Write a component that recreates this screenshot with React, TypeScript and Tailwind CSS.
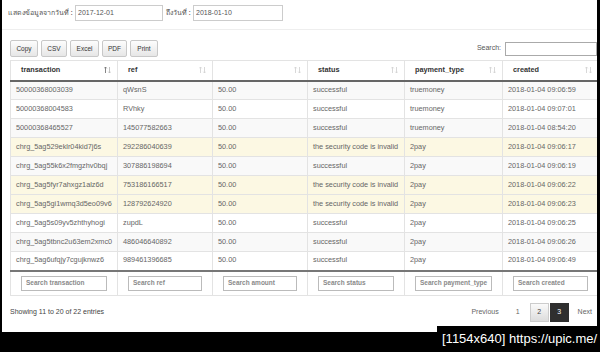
import React from "react";

const rows = [
  ["50000368003039", "qWsnS", "50.00", "successful", "truemoney", "2018-01-04 09:06:59"],
  ["50000368004583", "RVhky", "50.00", "successful", "truemoney", "2018-01-04 09:07:01"],
  ["50000368465527", "145077582663", "50.00", "successful", "truemoney", "2018-01-04 08:54:20"],
  ["chrg_5ag529eklr04kid7j6s", "292286040639", "50.00", "the security code is invalid", "2pay", "2018-01-04 09:06:17"],
  ["chrg_5ag55k6x2fmgzhv0bqj", "307886198694", "50.00", "successful", "2pay", "2018-01-04 09:06:19"],
  ["chrg_5ag5fyr7ahxgz1alz6d", "753186166517", "50.00", "the security code is invalid", "2pay", "2018-01-04 09:06:22"],
  ["chrg_5ag5gi1wmq3d5eo09v6", "128792624920", "50.00", "the security code is invalid", "2pay", "2018-01-04 09:06:23"],
  ["chrg_5ag5s09yv5zhthyhogi", "zupdL", "50.00", "successful", "2pay", "2018-01-04 09:06:25"],
  ["chrg_5ag5tbnc2u63em2xmc0", "486046640892", "50.00", "successful", "2pay", "2018-01-04 09:06:26"],
  ["chrg_5ag6ufqjy7cgujknwz6", "989461396685", "50.00", "successful", "2pay", "2018-01-04 09:06:49"],
];

const headers = ["transaction", "ref", "", "status", "payment_type", "created"];
const searches = ["Search transaction", "Search ref", "Search amount", "Search status", "Search payment_type", "Search created"];
const widths = ["w-[107px]", "w-[95px]", "w-[95px]", "w-[97px]", "w-[98px]", "w-[95px]"];

function SortIcon({ active }: { active?: boolean }) {
  return (
    <svg width="7" height="8" viewBox="0 0 7 8" className="shrink-0">
      <path d="M1.5 7V1M0.3 2.3L1.5 1L2.7 2.3" stroke={active ? "#777" : "#d4d4d4"} strokeWidth="0.9" fill="none" />
      <path d="M5.5 1V7M4.3 5.7L5.5 7L6.7 5.7" stroke={active ? "#bbb" : "#d4d4d4"} strokeWidth="0.9" fill="none" />
    </svg>
  );
}

export default function App() {
  return (
    <div className="relative w-[600px] h-[352px] bg-black overflow-hidden font-['Liberation_Sans',Arial,sans-serif]">
      <div className="ml-[2px] w-[595px] h-[332px] bg-white overflow-hidden">
        {/* date filter */}
        <div className="flex items-center h-[16px] mt-[5px] pl-[6px] text-[7px] text-[#555]">
          <span className="w-[67px] font-['Noto_Sans','DejaVu_Sans',sans-serif]">แสดงข้อมูลจากวันที่ :</span>
          <div className="w-[88px] h-[16px] border border-[#ccc] px-[2px] flex items-center">2017-12-01</div>
          <span className="ml-[3px] w-[27px] font-['Noto_Sans','DejaVu_Sans',sans-serif]">ถึงวันที่ :</span>
          <div className="w-[90px] h-[16px] border border-[#ccc] px-[2px] flex items-center">2018-01-10</div>
        </div>
        <div className="mt-[8px] h-px bg-[#eee]" />

        {/* toolbar */}
        <div className="flex items-center justify-between mt-[10px] pl-[8px] h-[17px]">
          <div className="flex gap-[3px] text-[6.5px] text-[#333]">
            {[["Copy", "w-[28px]"], ["CSV", "w-[26px]"], ["Excel", "w-[29px]"], ["PDF", "w-[25px]"], ["Print", "w-[28px]"]].map(([t, w]) => (
              <div key={t} className={`${w} h-[17px] flex items-center justify-center border border-[#c8c8c8] rounded-[2px] bg-gradient-to-b from-[#fdfdfd] to-[#e6e6e6]`}>
                {t}
              </div>
            ))}
          </div>
          <div className="flex items-center text-[7px] text-[#555]">
            <span className="mr-[4px]">Search:</span>
            <div className="w-[92px] h-[14px] border border-[#aaa] bg-white" />
          </div>
        </div>

        {/* table */}
        <table className="ml-[8px] mt-[3px] w-[587px] table-fixed border-collapse text-[7.3px] text-[#666]">
          <thead>
            <tr className="h-[20px] border-t border-[#e3e3e3]">
              {headers.map((h, i) => (
                <th key={i} className={`${widths[i]} p-0 border-l border-[#e3e3e3] border-b-2 border-b-[#666] font-bold text-[#333] text-left`}>
                  <div className="flex items-center justify-between pl-[10px] pr-[6px]">
                    <span>{h}</span>
                    <SortIcon active={i === 0} />
                  </div>
                </th>
              ))}
            </tr>
          </thead>
          <tbody>
            {rows.map((r, ri) => {
              const warn = r[3] !== "successful";
              const bg = warn ? "bg-[#fcf8e3]" : ri % 2 === 0 ? "bg-[#f9f9f9]" : "bg-white";
              return (
                <tr key={ri} className={`h-[19px] ${bg} border-t border-[#e3e3e3]`}>
                  {r.map((c, ci) => (
                    <td key={ci} className="p-0 pl-[5px] border-l border-[#e3e3e3] whitespace-nowrap overflow-hidden">
                      {c}
                    </td>
                  ))}
                </tr>
              );
            })}
          </tbody>
          <tfoot>
            <tr className="h-[25px] border-t-2 border-[#777] border-b border-b-[#e3e3e3]">
              {searches.map((s, i) => (
                <td key={i} className="p-0 px-[10px] border-l border-[#e3e3e3]">
                  <div className="h-[15px] border border-[#bbb] pl-[4px] flex items-center text-[6.5px] font-bold text-[#8a8a8a] whitespace-nowrap overflow-hidden">
                    {s}
                  </div>
                </td>
              ))}
            </tr>
          </tfoot>
        </table>

        {/* info + pagination */}
        <div className="flex items-center justify-between pl-[8px] pr-[5px] mt-[7px] h-[19px] text-[7px]">
          <span className="text-[#444]">Showing 11 to 20 of 22 entries</span>
          <div className="flex items-center text-[#666]">
            <span className="mr-[17px]">Previous</span>
            <span className="mr-[10px]">1</span>
            <div className="w-[19px] h-[19px] flex items-center justify-center border border-[#ccc] bg-gradient-to-b from-[#fafafa] to-[#dcdcdc] text-[#444]">2</div>
            <div className="w-[19px] h-[19px] ml-[1px] flex items-center justify-center bg-[#2f2f2f] text-white">3</div>
            <span className="ml-[9px]">Next</span>
          </div>
        </div>
      </div>

      {/* watermark */}
      <div className="absolute right-0 bottom-0 w-[163px] h-[26px] bg-black flex items-center pl-[5px] text-[13px] text-white whitespace-nowrap">
        [1154x640] https://upic.me/
      </div>
    </div>
  );
}
